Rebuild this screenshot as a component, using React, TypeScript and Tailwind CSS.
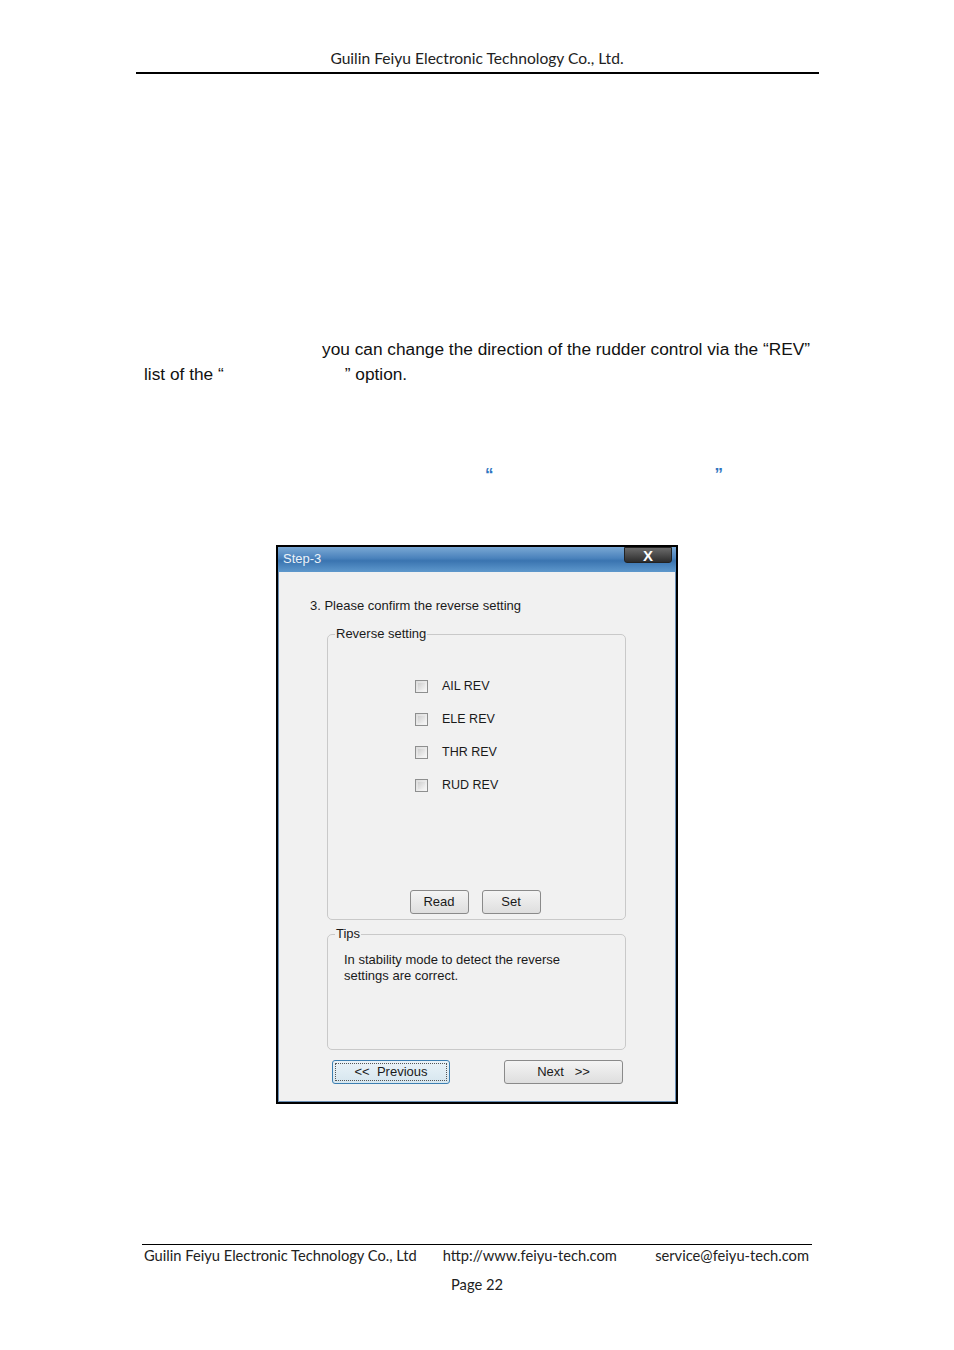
import React from 'react';

const ui = { fontFamily: '"Liberation Sans", Arial, sans-serif' };
const doc = { fontFamily: 'Lato, "Open Sans", sans-serif' };

const Check: React.FC<{ label: string }> = ({ label }) => (
  <div className="flex items-center h-[13px]">
    <div className="w-[13px] h-[13px] border border-[#8e8f8f] bg-[linear-gradient(135deg,#dcdcdc,#f7f7f7)] p-[2px]">
      <div className="w-full h-full bg-[linear-gradient(135deg,#cfcfcf,#f4f4f4)]" />
    </div>
    <span className="ml-[14px] text-[12.5px] text-[#1a1a1a]">{label}</span>
  </div>
);

const Btn: React.FC<{ w: string; children: React.ReactNode; focus?: boolean }> = ({ w, children, focus }) => (
  <button
    className={
      focus
        ? `${w} h-[24px] rounded-[3px] border border-[#3c7fb1] bg-[linear-gradient(#eaf3f8,#d6e6ef)] p-[2px] text-[13px] text-[#1a1a1a]`
        : `${w} h-[24px] rounded-[3px] border border-[#8a8a8a] bg-[linear-gradient(#f4f4f4,#dedede)] text-[13px] text-[#1a1a1a]`
    }
  >
    {focus ? (
      <div className="w-full h-full border border-dotted border-[#555] flex items-center justify-center">{children}</div>
    ) : (
      children
    )}
  </button>
);

export default function App() {
  return (
    <div className="w-[954px] h-[1350px] bg-white relative text-black">
      {/* page header */}
      <div className="pt-[48px]" style={doc}>
        <div className="text-center text-[15.6px] leading-[20px] text-[#222]">Guilin Feiyu Electronic Technology Co., Ltd.</div>
        <div className="ml-[136px] w-[683px] h-[2px] bg-black mt-[4px]" />
      </div>

      {/* body text */}
      <div className="mt-[263px] ml-[144px] w-[670px] text-[17.3px] leading-[25px] text-[#111]" style={ui}>
        <div className="pl-[178px] whitespace-nowrap">you can change the direction of the rudder control via the “REV”</div>
        <div>
          list of the “<span className="inline-block w-[121px]" />” option.
        </div>
        <div className="mt-[75px] h-[21px] text-[17px] font-bold text-[#2f74c0]">
          <span className="ml-[341px]">“</span>
          <span className="ml-[221px]">”</span>
        </div>
      </div>

      {/* dialog screenshot */}
      <div className="mt-[62px] ml-[276px] w-[402px] h-[559px] border-2 border-black flex flex-col" style={ui}>
        <div className="h-[25px] shrink-0 flex items-start justify-between bg-[linear-gradient(180deg,#7aa8d4_0%,#4a82bc_45%,#3a74b0_55%,#5e98cc_100%)]">
          <span className="text-[13px] text-white/90 leading-[22px] pl-[5px] pt-[1px]">Step-3</span>
          <div className="w-[48px] h-[16px] mr-[4px] rounded-b-[3px] border border-[#222] bg-[linear-gradient(#6a6a6a,#2c2c2c)] flex items-center justify-center">
            <span className="text-white font-bold text-[15px] leading-none">X</span>
          </div>
        </div>
        <div className="flex-1 bg-[#f1f1f1] border-x border-b border-[#6a8fb5] pl-[31px]">
          <div className="mt-[26px] text-[13px] leading-[16px] text-[#1a1a1a]">3. Please confirm the reverse setting</div>

          <fieldset className="mt-[12px] ml-[17px] w-[299px] h-[294px] border border-[#c9c9c9] rounded-[5px] px-[9px] pb-[6px] flex flex-col">
            <legend className="text-[13px] text-[#1a1a1a] px-[1px] -ml-[2px] leading-[16px]">Reverse setting</legend>
            <div className="pl-[78px] mt-[38px] flex flex-col gap-[20px]">
              <Check label="AIL REV" />
              <Check label="ELE REV" />
              <Check label="THR REV" />
              <Check label="RUD REV" />
            </div>
            <div className="mt-auto mb-[-1px] flex justify-center gap-[13px] pr-[3px]">
              <Btn w="w-[59px]">Read</Btn>
              <Btn w="w-[59px]">Set</Btn>
            </div>
          </fieldset>

          <fieldset className="mt-[6px] ml-[17px] w-[299px] h-[124px] border border-[#c9c9c9] rounded-[5px] px-[16px]">
            <legend className="text-[13px] text-[#1a1a1a] px-[1px] -ml-[9px] leading-[16px]">Tips</legend>
            <div className="mt-[10px] text-[13px] leading-[16px] text-[#1a1a1a]">
              In stability mode to detect the reverse
              <br />
              settings are correct.
            </div>
          </fieldset>

          <div className="mt-[10px] ml-[22px] w-[291px] flex justify-between">
            <Btn w="w-[118px]" focus>&lt;&lt;&nbsp; Previous</Btn>
            <Btn w="w-[119px]">Next &nbsp;&nbsp;&gt;&gt;</Btn>
          </div>
        </div>
      </div>

      {/* page footer */}
      <div className="mt-[140px] ml-[142px] w-[670px]" style={doc}>
        <div className="h-px bg-black" />
        <div className="flex text-[14.7px] leading-[20px] text-[#222] pl-[2px] pr-[3px]">
          <span>Guilin Feiyu Electronic Technology Co., Ltd</span>
          <span className="ml-[26px]">http://www.feiyu-tech.com</span>
          <span className="ml-auto">service@feiyu-tech.com</span>
        </div>
        <div className="text-center text-[14.7px] leading-[20px] text-[#222] mt-[9px]">Page 22</div>
      </div>
    </div>
  );
}
